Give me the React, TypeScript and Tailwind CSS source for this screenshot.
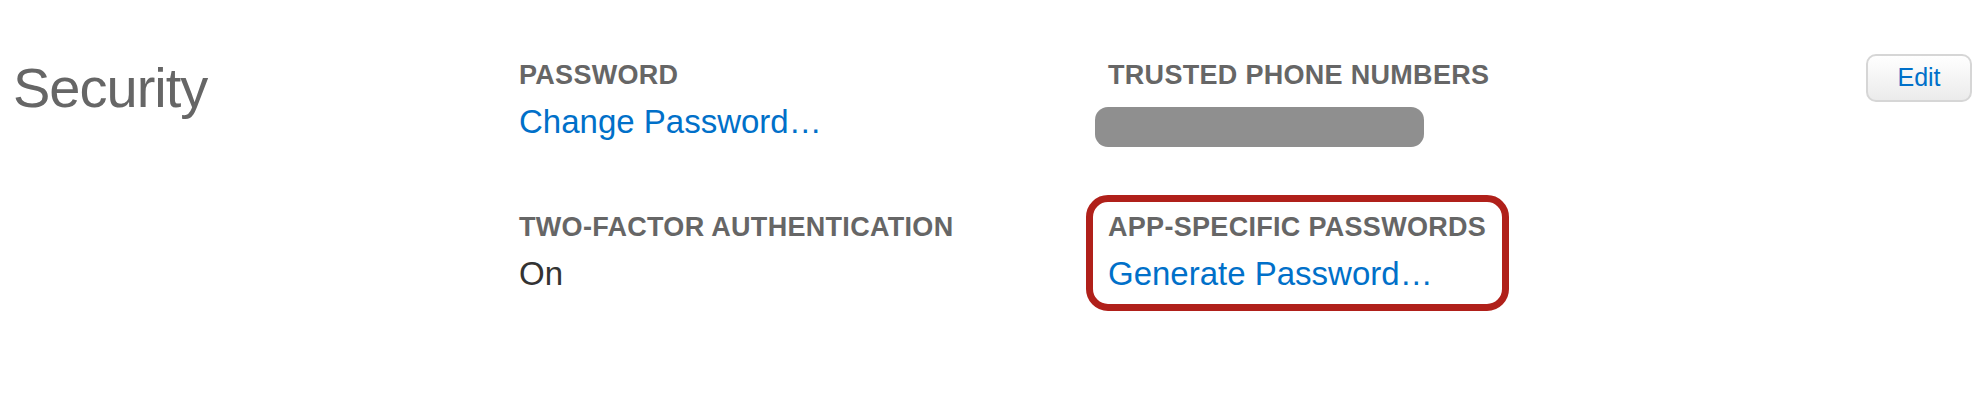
const font = { fontFamily: '"Liberation Sans", Arial, sans-serif' };

function Label({ children }: { children: string }) {
  return (
    <div className="text-[27px] leading-[30px] font-bold tracking-[0.3px] text-[#666666] whitespace-nowrap">
      {children}
    </div>
  );
}

function Value({ children, link }: { children: string; link?: boolean }) {
  return (
    <div
      className={`mt-[12px] text-[33px] leading-[40px] whitespace-nowrap ${
        link ? "text-[#0070c9]" : "text-[#333333]"
      }`}
    >
      {children}
    </div>
  );
}

export default function App() {
  return (
    <div style={font} className="w-full h-[414px] bg-white flex items-start pt-[60px]">
      {/* Section title */}
      <div className="w-[519px] shrink-0 pl-[13px]">
        <h2 className="text-[56px] leading-[56px] tracking-[-1px] text-[#666666]">Security</h2>
      </div>

      {/* Left column */}
      <div className="w-[589px] shrink-0 flex flex-col">
        <Label>PASSWORD</Label>
        <Value link>Change Password…</Value>
        <div className="mt-[70px]">
          <Label>TWO-FACTOR AUTHENTICATION</Label>
          <Value>On</Value>
        </div>
      </div>

      {/* Right column */}
      <div className="flex-1 flex flex-col items-start">
        <Label>TRUSTED PHONE NUMBERS</Label>
        <div className="mt-[17px] -ml-[13px] w-[329px] h-[40px] rounded-[13px] bg-[#8f8f8f]" />
        <div className="mt-[48px] -ml-[22px] border-[7px] border-[#b0201a] rounded-[22px] pt-[10px] pl-[15px] pr-[16px] pb-[10px]">
          <Label>APP-SPECIFIC PASSWORDS</Label>
          <Value link>Generate Password…</Value>
        </div>
      </div>

      <button className="-mt-[6px] mr-[12px] w-[106px] h-[48px] shrink-0 rounded-[10px] border-2 border-[#d6d6d6] bg-gradient-to-b from-white to-[#ebebeb] text-[25px] text-[#0070c9] flex items-center justify-center">
        Edit
      </button>
    </div>
  );
}
